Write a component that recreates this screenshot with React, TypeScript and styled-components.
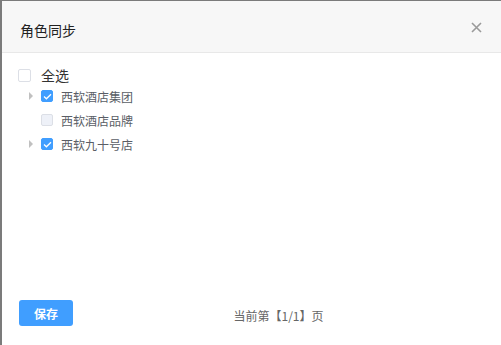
import styled, { createGlobalStyle } from 'styled-components';

const GlobalStyle = createGlobalStyle`
    html, body {
        margin: 0;
        padding: 0;
        background: #7b7b7b;
        font-family: "Noto Sans CJK SC", "Noto Sans", sans-serif;
    }
    #root {
        height: 345px;
        padding: 1px 0 0 2px;
        box-sizing: border-box;
    }
`;

type Node = { name: string; checked: boolean; hasChildren: boolean };

const nodes: Node[] = [
    { name: '西软酒店集团', checked: true, hasChildren: true },
    { name: '西软酒店品牌', checked: false, hasChildren: false },
    { name: '西软九十号店', checked: true, hasChildren: true },
];

function CheckIcon() {
    return (
        <svg width="9" height="7" viewBox="0 0 9 7">
            <path d="M1 3.6 L3.4 5.8 L8 1.2" fill="none" stroke="#fff" strokeWidth="1.3" />
        </svg>
    );
}

export default function App() {
    return (
        <>
            <GlobalStyle />
            <Dialog>
                <Header>
                    <Title>角色同步</Title>
                    <Close>
                        <svg width="11" height="11" viewBox="0 0 11 11">
                            <path d="M1 1 L10 10 M10 1 L1 10" stroke="#9a9a9a" strokeWidth="1.6" />
                        </svg>
                    </Close>
                </Header>
                <Body>
                    <AllRow>
                        <Box $checked={false} $size={13} />
                        <span>全选</span>
                    </AllRow>
                    <Tree>
                        {nodes.map((n) => (
                            <TreeRow key={n.name}>
                                <Arrow $visible={n.hasChildren} />
                                <Box $checked={n.checked} $size={12} $light={!n.checked}>
                                    {n.checked && <CheckIcon />}
                                </Box>
                                <span>{n.name}</span>
                            </TreeRow>
                        ))}
                    </Tree>
                </Body>
                <Footer>
                    <SaveButton>保存</SaveButton>
                    <Pager>当前第【1/1】页</Pager>
                </Footer>
            </Dialog>
        </>
    );
}

const Dialog = styled.div`
    height: 100%;
    background: #fff;
    display: flex;
    flex-direction: column;
`;

const Header = styled.div`
    height: 51px;
    flex-shrink: 0;
    background: #f7f7f7;
    border-bottom: 1px solid #e8e8e8;
    display: flex;
    align-items: center;
    justify-content: space-between;
    padding: 0 19px 0 18px;
`;

const Title = styled.div`
    font-size: 14px;
    color: #222;
    padding-top: 7px;
`;

const Close = styled.div`
    display: flex;
    padding-top: 2px;
`;

const Body = styled.div`
    flex: 1;
    padding: 12px 16px 0;
`;

const AllRow = styled.div`
    display: flex;
    align-items: center;
    gap: 10px;
    height: 20px;
    font-size: 14px;
    color: #333;
`;

const Tree = styled.div`
    display: flex;
    flex-direction: column;
    margin-top: -1px;
`;

const TreeRow = styled.div`
    display: flex;
    align-items: center;
    height: 24px;
    font-size: 12px;
    color: #5a5e66;
    span {
        margin-left: 8px;
    }
`;

const Arrow = styled.div<{ $visible: boolean }>`
    width: 0;
    height: 0;
    margin: 0 8px 0 11px;
    border-top: 4px solid transparent;
    border-bottom: 4px solid transparent;
    border-left: 4px solid ${({ $visible }) => ($visible ? '#c0c0c0' : 'transparent')};
`;

const Box = styled.div<{ $checked: boolean; $size: number; $light?: boolean }>`
    width: ${({ $size }) => $size}px;
    height: ${({ $size }) => $size}px;
    box-sizing: border-box;
    border-radius: 2px;
    display: flex;
    align-items: center;
    justify-content: center;
    border: 1px solid ${({ $checked }) => ($checked ? '#409eff' : '#dcdfe6')};
    background: ${({ $checked, $light }) => ($checked ? '#409eff' : $light ? '#eef1f8' : '#fff')};
`;

const Footer = styled.div`
    height: 45px;
    flex-shrink: 0;
    display: flex;
    align-items: flex-start;
    padding: 0 17px 0;
`;

const SaveButton = styled.button`
    width: 54px;
    height: 26px;
    border: none;
    border-radius: 3px;
    background: #409eff;
    color: #fff;
    font-family: inherit;
    font-size: 12px;
    font-weight: bold;
    cursor: pointer;
`;

const Pager = styled.div`
    flex: 1;
    text-align: center;
    font-size: 12px;
    color: #666;
    padding-top: 7px;
`;
